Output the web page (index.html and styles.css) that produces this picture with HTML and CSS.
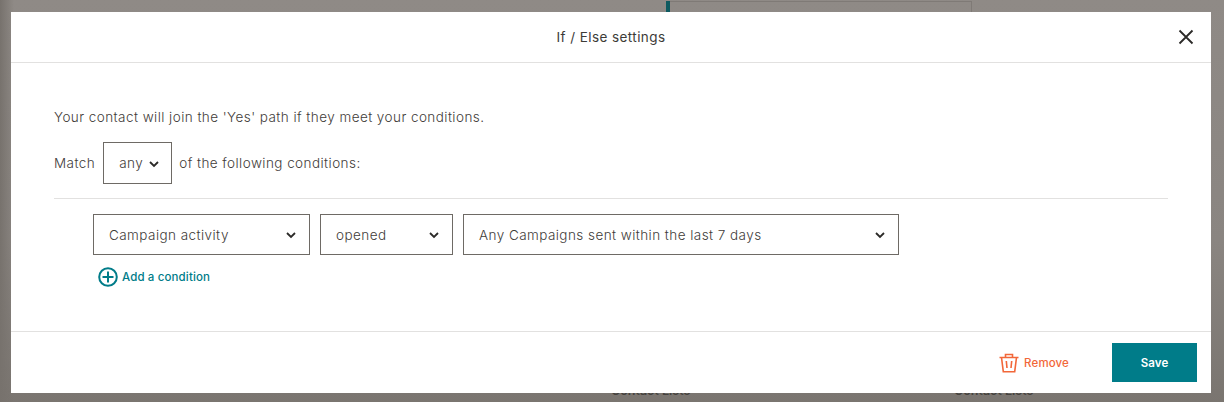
FILE: index.html
```html
<!DOCTYPE html>
<html lang="en">
<head>
<meta charset="utf-8">
<title>If / Else settings</title>
<link rel="stylesheet" href="styles.css">
</head>
<body>
<div class="bg-line bg-teal"></div>
<div class="bg-line bg-box"></div>
<div class="bg-label bg-label-a">Contact Lists</div>
<div class="bg-label bg-label-b">Contact Lists</div>
<main class="modal">
  <header class="modal-head">
    <h1 class="title">If / Else settings</h1>
    <svg class="close" viewBox="0 0 16 16" width="16" height="16"><path d="M1.5 1.5l13 13M14.5 1.5l-13 13" fill="none" stroke="#2b2a28" stroke-width="1.8"/></svg>
  </header>
  <section class="modal-body">
    <p class="intro">Your contact will join the 'Yes' path if they meet your conditions.</p>
    <div class="match">
      <span>Match</span>
      <div class="select select-any"><span>any</span><svg class="chev" viewBox="0 0 10 7" width="10" height="7"><path d="M1 1l4 4 4-4" fill="none" stroke="#2b2a28" stroke-width="1.8"/></svg></div>
      <span>of the following conditions:</span>
    </div>
    <div class="conditions">
      <div class="cond-row">
        <div class="select select-a"><span>Campaign activity</span><svg class="chev" viewBox="0 0 10 7" width="10" height="7"><path d="M1 1l4 4 4-4" fill="none" stroke="#2b2a28" stroke-width="1.8"/></svg></div>
        <div class="select select-b"><span>opened</span><svg class="chev" viewBox="0 0 10 7" width="10" height="7"><path d="M1 1l4 4 4-4" fill="none" stroke="#2b2a28" stroke-width="1.8"/></svg></div>
        <div class="select select-c"><span>Any Campaigns sent within the last 7 days</span><svg class="chev" viewBox="0 0 10 7" width="10" height="7"><path d="M1 1l4 4 4-4" fill="none" stroke="#2b2a28" stroke-width="1.8"/></svg></div>
      </div>
      <div class="add">
        <svg viewBox="0 0 20 20" width="20" height="20"><circle cx="10" cy="10" r="8.8" fill="none" stroke="#007c89" stroke-width="2"/><path d="M10 4.5v11M4.5 10h11" fill="none" stroke="#007c89" stroke-width="2"/></svg>
        <span>Add a condition</span>
      </div>
    </div>
  </section>
  <footer class="modal-foot">
    <div class="remove">
      <svg viewBox="0 0 20 20" width="20" height="20"><path d="M0.5 4.5h19M6.5 4.5V1.5h7v3M2.5 4.5l1.8 14.2h11.4l1.8-14.2M7.3 8l.7 7M12.7 8l-.7 7" fill="none" stroke="#f26739" stroke-width="1.6"/></svg>
      <span>Remove</span>
    </div>
    <div class="save">Save</div>
  </footer>
</main>
</body>
</html>
```
FILE: styles.css
```css
* { box-sizing: border-box; }
html, body { margin: 0; height: 402px; overflow: hidden; }
body {
  position: relative;
  width: 1224px;
  padding: 12px 13px 9px 11px;
  background-color: #87827d;
  background-image: linear-gradient(90deg, #77726d 0, rgba(119,114,109,0) 14px), linear-gradient(180deg, #8f8a86 0, #8a8581 60%, #7a7570 100%);
  font-family: Inter, "Liberation Sans", sans-serif;
  font-size: 13.5px;
  font-weight: 300;
  color: #3f3c39;
  letter-spacing: 0.44px;
}
.bg-line { position: absolute; top: 1px; height: 11px; }
.bg-teal { left: 666px; width: 4px; background: #0e5a60; }
.bg-box { left: 670px; width: 302px; border-top: 1px solid #7f7a76; border-right: 1px solid #7f7a76; }
.bg-label { position: absolute; top: 383px; font-size: 12.5px; font-weight: 600; color: #45423e; letter-spacing: 0; }
.bg-label-a { left: 611px; }
.bg-label-b { left: 954px; }
.modal {
  position: relative;
  display: flex;
  flex-direction: column;
  height: 381px;
  background: #fff;
}
.modal-head {
  position: relative;
  display: flex;
  align-items: center;
  justify-content: center;
  height: 51px;
  border-bottom: 1px solid #e2e1e0;
}
.title { margin: 0; font-size: 13.5px; font-weight: 400; color: #3d3b38; letter-spacing: 0.42px; }
.close { position: absolute; right: 17px; top: 17px; }
.modal-body { flex: 1; padding: 44px 43px 0; }
.intro { margin: 0; line-height: 20px; }
.match { display: flex; align-items: center; gap: 8px; margin-top: 15px; height: 42px; }
.select {
  display: flex;
  align-items: center;
  justify-content: space-between;
  border: 1px solid #6e6a65;
  background: #fff;
  height: 41px;
  padding: 0 13px 0 15px;
}
.chev { position: relative; top: 1px; }
.select-any { width: 69px; height: 42px; padding-right: 12px; margin-right: -1px; }
.select-a { width: 217px; }
.select-b { width: 133px; }
.select-c { width: 436px; }
.conditions { margin-top: 14px; padding: 15px 0 0 39px; border-top: 1px solid #e2e1e0; }
.cond-row { display: flex; gap: 10px; }
.add { display: flex; align-items: center; gap: 4px; margin: 12px 0 0 5px; color: #007c89; font-size: 11.5px; font-weight: 500; letter-spacing: 0.13px; }
.modal-foot {
  display: flex;
  align-items: center;
  justify-content: flex-end;
  height: 62px;
  padding-right: 14px;
  border-top: 1px solid #e2e1e0;
}
.remove { display: flex; align-items: center; gap: 5px; margin-right: 43px; color: #f26739; font-size: 11.5px; font-weight: 500; letter-spacing: 0.13px; }
.save {
  display: flex;
  align-items: center;
  justify-content: center;
  width: 85px;
  height: 39px;
  background: #007c89;
  color: #fff;
  font-size: 11.5px;
  font-weight: 600;
  letter-spacing: 0.1px;
}
```
